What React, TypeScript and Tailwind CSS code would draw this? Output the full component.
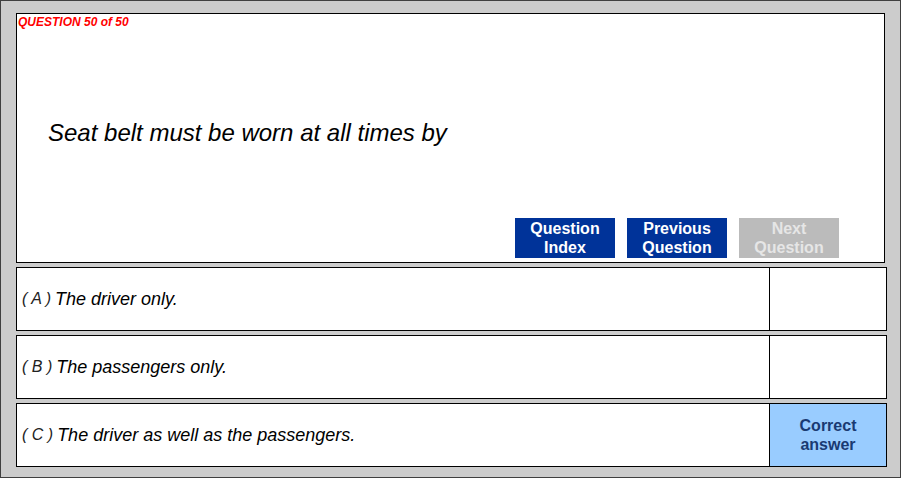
import React from 'react';

interface Choice {
  label: string;
  text: string;
  correct: boolean;
}

const choices: Choice[] = [
  { label: 'A', text: 'The driver only.', correct: false },
  { label: 'B', text: 'The passengers only.', correct: false },
  { label: 'C', text: 'The driver as well as the passengers.', correct: true },
];

const NavButton = ({ top, bottom, disabled }: { top: string; bottom: string; disabled?: boolean }) => (
  <button
    className={
      disabled
        ? 'w-[100px] h-[40px] bg-[#bbbbbb] text-[#e6e6e6] font-bold text-[16px] leading-[19px] flex flex-col items-center justify-center'
        : 'w-[100px] h-[40px] bg-[#003399] text-white font-bold text-[16px] leading-[19px] flex flex-col items-center justify-center'
    }
  >
    <span>{top}</span>
    <span>{bottom}</span>
  </button>
);

const App = () => {
  return (
    <div className="w-[902px] h-[479px] bg-white" style={{ fontFamily: '"Liberation Sans", Arial, sans-serif' }}>
      <div className="w-[901px] h-[478px] bg-[#cccccc] border border-[#404040] pl-[15px] pt-[12px] flex flex-col gap-[4px]">
        {/* Question box */}
        <div className="w-[869px] h-[250px] bg-white border border-black flex flex-col">
          <div className="pl-[1px] pt-[1px] text-[12px] leading-[14px] font-bold italic text-[#ff0000]">QUESTION 50 of 50</div>
          <div className="pl-[31px] mt-[90px] text-[24px] leading-[28px] italic text-black">Seat belt must be worn at all times by</div>
          <div className="mt-auto mb-[4px] flex justify-end gap-[12px] pr-[45px]">
            <NavButton top="Question" bottom="Index" />
            <NavButton top="Previous" bottom="Question" />
            <NavButton top="Next" bottom="Question" disabled />
          </div>
        </div>

        {/* Answer choices */}
        {choices.map((c) => (
          <div key={c.label} className="w-[871px] h-[64px] bg-white border border-black flex">
            <div className="flex-1 flex items-center pl-[5px] italic text-black">
              <span className="text-[16px] text-[#222]">( {c.label} )</span>
              <span className="text-[18px] ml-[4px]">{c.text}</span>
            </div>
            <div
              className={
                c.correct
                  ? 'w-[117px] border-l border-black bg-[#99ccff] flex flex-col items-center justify-center text-[16px] leading-[19px] font-bold text-[#1a3a72]'
                  : 'w-[117px] border-l border-black'
              }
            >
              {c.correct && (
                <>
                  <span>Correct</span>
                  <span>answer</span>
                </>
              )}
            </div>
          </div>
        ))}
      </div>
    </div>
  );
};

export default App;
